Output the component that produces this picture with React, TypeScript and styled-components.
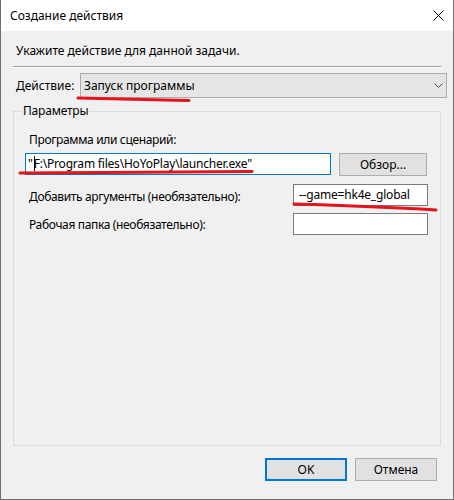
import React from "react";
import styled, { createGlobalStyle, css } from "styled-components";

const Global = createGlobalStyle`
  html, body { margin: 0; padding: 0; background: #f0f0f0; }
  body { font-family: "Noto Sans", "Liberation Sans", sans-serif; font-size: 12px; color: #000; }
  * { box-sizing: border-box; }
`;

const Window = styled.div`
  position: relative;
  width: 454px;
  height: 500px;
  border: 1px solid #707070;
  border-top: none;
  display: flex;
  flex-direction: column;
  background: #f0f0f0;
`;

const TitleBar = styled.div`
  height: 31px;
  flex: none;
  background: #fff;
  display: flex;
  align-items: center;
  padding-left: 9px;
  padding-right: 9px;
`;

const Title = styled.div`
  flex: 1;
  line-height: 16px;
`;

const Close = styled.svg`
  width: 11px;
  height: 11px;
  display: block;
`;

const Body = styled.div`
  flex: 1;
  display: flex;
  flex-direction: column;
  padding: 0 6px 0 12px;
`;

const Instruction = styled.div`
  margin: 12px 0 0 3px;
  line-height: 16px;
`;

const Separator = styled.div`
  margin: 7px 6px 0 0;
  height: 2px;
  border-top: 1px solid #a0a0a0;
  border-bottom: 1px solid #ffffff;
`;

const ActionRow = styled.div`
  margin-top: 5px;
  display: flex;
  align-items: center;
  padding-left: 3px;
  height: 25px;
`;

const RowLabel = styled.div`
  width: 64px;
  line-height: 16px;
  flex: none;
`;

const Combo = styled.div`
  flex: 1;
  height: 25px;
  background: #e5e5e5;
  border: 1px solid #adadad;
  display: flex;
  align-items: center;
  padding: 0 3px 0 3px;
`;

const ComboText = styled.div`
  flex: 1;
  line-height: 16px;
`;

const Chevron = styled.svg`
  width: 9px;
  height: 6px;
  display: block;
`;

const GroupBox = styled.div`
  position: relative;
  margin: 13px 6px 0 0;
  height: 335px;
  border: 1px solid #dcdcdc;
  padding: 20px 12px 0 11px;
  display: flex;
  flex-direction: column;
`;

const Legend = styled.div`
  position: absolute;
  top: -9px;
  left: 8px;
  padding: 0 1px;
  background: #f0f0f0;
  line-height: 16px;
  letter-spacing: -0.2px;
`;

const FieldLabel = styled.div<{ $offset?: number }>`
  margin-left: 4px;
  margin-top: ${(p) => p.$offset ?? 0}px;
  line-height: 16px;
  letter-spacing: -0.35px;
`;

const ProgramRow = styled.div`
  margin-top: 5px;
  display: flex;
  align-items: flex-start;
  gap: 8px;
`;

const OptRow = styled.div<{ $gap: number }>`
  margin-top: ${(p) => p.$gap}px;
  display: flex;
  align-items: flex-start;
  justify-content: space-between;
`;

const TextInput = styled.div<{ $width: number; $focused?: boolean }>`
  width: ${(p) => p.$width}px;
  height: 22px;
  flex: none;
  background: #fff;
  border: 1px solid ${(p) => (p.$focused ? "#0078d7" : "#7a7a7a")};
  display: flex;
  align-items: center;
  padding: 0 2px 1px 2px;
  line-height: 16px;
  white-space: nowrap;
  overflow: hidden;
  letter-spacing: -0.2px;
`;

const Caret = styled.span`
  display: inline-block;
  width: 1px;
  height: 15px;
  background: #000;
  margin: 0 -1px 0 1px;
  vertical-align: middle;
`;

const Button = styled.div<{ $width: number; $default?: boolean }>`
  width: ${(p) => p.$width}px;
  height: 23px;
  flex: none;
  background: #e1e1e1;
  border: 1px solid #adadad;
  display: flex;
  align-items: center;
  justify-content: center;
  line-height: 16px;
  ${(p) =>
    p.$default &&
    css`
      border: 2px solid #0078d7;
    `}
`;

const Footer = styled.div`
  margin-top: 12px;
  display: flex;
  justify-content: flex-end;
  gap: 8px;
  padding-right: 10px;
`;

const Annotations = styled.svg`
  position: absolute;
  left: -1px;
  top: 0;
  width: 454px;
  height: 500px;
  pointer-events: none;
`;

export default function App() {
  return (
    <>
      <Global />
      <Window>
        <TitleBar>
          <Title>Создание действия</Title>
          <Close viewBox="0 0 11 11">
            <path d="M0.5 0.5 L10.5 10.5 M10.5 0.5 L0.5 10.5" stroke="#000" strokeWidth="1" fill="none" />
          </Close>
        </TitleBar>
        <Body>
          <Instruction>Укажите действие для данной задачи.</Instruction>
          <Separator />
          <ActionRow>
            <RowLabel>Действие:</RowLabel>
            <Combo>
              <ComboText>Запуск программы</ComboText>
              <Chevron viewBox="0 0 9 6">
                <path d="M0.5 0.5 L4.5 4.5 L8.5 0.5" stroke="#555" strokeWidth="1" fill="none" />
              </Chevron>
            </Combo>
          </ActionRow>
          <GroupBox>
            <Legend>Параметры</Legend>
            <FieldLabel>Программа или сценарий:</FieldLabel>
            <ProgramRow>
              <TextInput $width={306} $focused>
                <span>"</span>
                <Caret />
                <span>F:\Program files\HoYoPlay\launcher.exe"</span>
              </TextInput>
              <Button $width={88}>Обзор...</Button>
            </ProgramRow>
            <OptRow $gap={8}>
              <FieldLabel $offset={5}>Добавить аргументы (необязательно):</FieldLabel>
              <TextInput $width={135}>&nbsp;--game=hk4e_global</TextInput>
            </OptRow>
            <OptRow $gap={7}>
              <FieldLabel $offset={4}>Рабочая папка (необязательно):</FieldLabel>
              <TextInput $width={135} />
            </OptRow>
          </GroupBox>
          <Footer>
            <Button $width={82} $default>
              OK
            </Button>
            <Button $width={82}>Отмена</Button>
          </Footer>
        </Body>
        <Annotations viewBox="0 0 454 500">
          <g stroke="#e3141b" strokeWidth="3" fill="none" strokeLinecap="round">
            <path d="M78 98 C 110 99, 150 99.5, 189 100.5" />
            <path d="M20 173 C 90 172.5, 180 172, 252 171.5" />
            <path d="M294 204 C 330 205, 380 206.5, 436 210" />
          </g>
        </Annotations>
      </Window>
    </>
  );
}
